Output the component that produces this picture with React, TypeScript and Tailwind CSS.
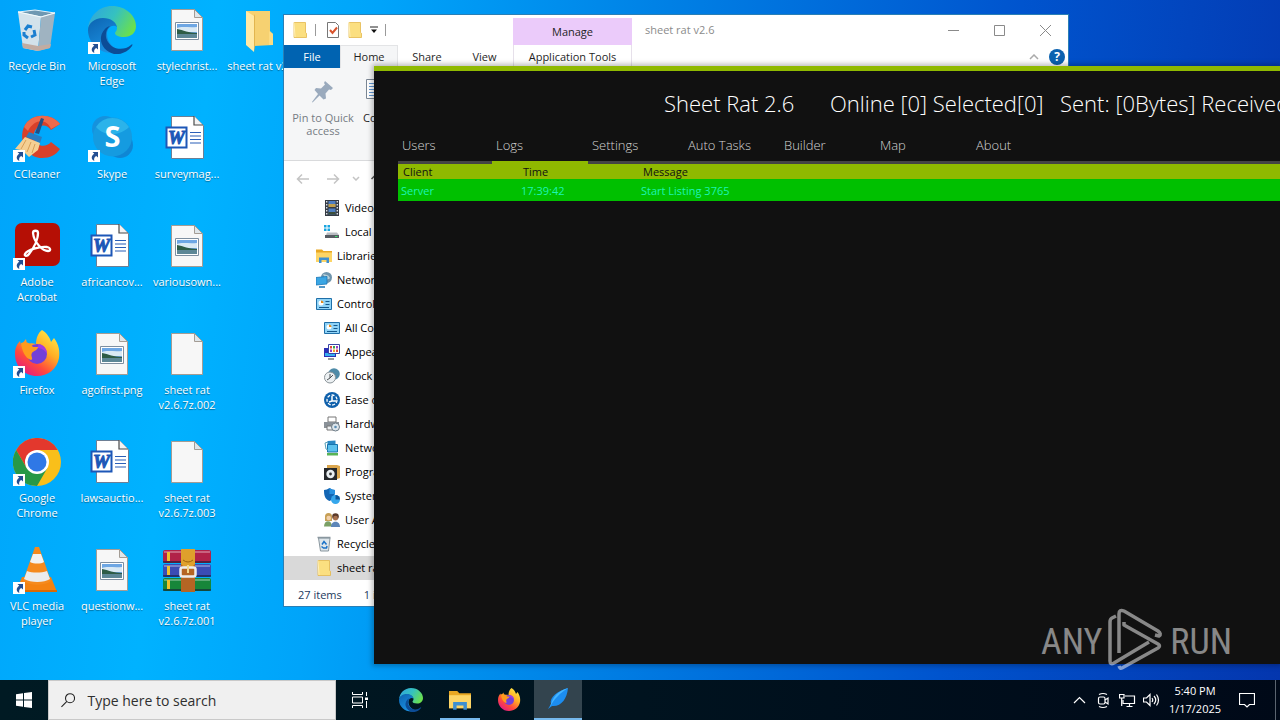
import type { ReactNode } from "react";

type IconProps = { className?: string };

/* ---------- desktop icons ---------- */

function RecycleBin({ className = "size-12" }: IconProps) {
  return (
    <svg viewBox="0 0 48 48" className={className} aria-hidden="true">
      <path d="M5 6l17-2 20 3-14 4z" fill="#6f98b2" stroke="#e6f1f7" strokeWidth="1" />
      <path d="M5 6l23 5-3 34-15-3z" fill="#d3e2eb" />
      <path d="M28 11l14-4-5 35-12 3z" fill="#9fb3c1" />
      <path d="M9 37l16 3 13-2-1 4-12 3-15-3z" fill="#c2aca2" />
      <path d="M5 6l23 5 14-4" fill="none" stroke="#f4fafc" strokeWidth="1.200" />
      <g fill="none" stroke="#1b7fd0" strokeWidth="3">
        <path d="M12 24l3-4 4 1" />
        <path d="M21 24l1 5-4 2" />
        <path d="M15 32l-4-3v-3" />
      </g>
    </svg>
  );
}

function Edge({ className = "size-12" }: IconProps) {
  return (
    <svg viewBox="0 0 48 48" className={className} aria-hidden="true">
      <defs>
        <linearGradient id="edgeTop" x1="0" y1="0.2" x2="1" y2="0.6">
          <stop offset="0" stopColor="#2fa6dd" />
          <stop offset="0.5" stopColor="#35c1c0" />
          <stop offset="1" stopColor="#6be04c" />
        </linearGradient>
        <linearGradient id="edgeMid" x1="0" y1="0" x2="0.6" y2="1">
          <stop offset="0" stopColor="#0c63b0" />
          <stop offset="1" stopColor="#1c93e4" />
        </linearGradient>
      </defs>
      <path d="M0 23C1 10 11 0 24 0c14 0 24 10 24 20 0 7-5 11-12 11-6 0-9-2-9-4 0-1 2-2 2-5 0-4-5-9-13-9C8 13 1 18 0 23z" fill="url(#edgeTop)" />
      <path d="M0 24c0-6 6-12 15-12 8 0 13 4 14 9-4-3-10 0-10 7 0 9 7 15 15 17-15 7-34-4-34-21z" fill="url(#edgeMid)" />
      <path d="M22 20c-4 3-6 10-2 16 5 8 16 9 23 3 1-1 2-1 1 1-4 6-12 9-18 8C18 46 12 39 13 31c1-6 5-10 9-11z" fill="#0c4c96" />
    </svg>
  );
}

function Page({ children }: { children?: ReactNode }) {
  return (
    <svg viewBox="0 0 48 48" className="size-12" aria-hidden="true">
      <path d="M8.500 3.500h23l8 8v33h-31z" fill="#f7f7f7" stroke="#a49c94" strokeWidth="1" />
      <path d="M31.500 3.500v8h8z" fill="#dfe6ea" stroke="#a49c94" strokeWidth="1" />
      {children}
    </svg>
  );
}

function PictureFile() {
  return (
    <Page>
      <path d="M12.500 16.500h23v17h-23z" fill="#fff" stroke="#7e8fa0" />
      <path d="M14 18h20v14H14z" fill="#6ea7e4" />
      <path d="M14 22c5-2 12 0 20-1v5H14z" fill="#d9e9f4" />
      <path d="M14 23c6 1 12 4 20 4v1H14z" fill="#2e5c46" />
      <path d="M14 28h20v4H14z" fill="#5d8796" />
    </Page>
  );
}

function WordFile() {
  return (
    <svg viewBox="0 0 48 48" className="size-12" aria-hidden="true">
      <path d="M8.500 2.500h23l9 9v33h-32z" fill="#fff" stroke="#6d7f95" strokeWidth="1" />
      <path d="M31 2v9h9" fill="#f3f3f3" stroke="#4b4b4b" strokeWidth="1.200" />
      <path d="M27 18.500h11M27 22h11M27 25.500h11M27 29h11" stroke="#2b5fb8" strokeWidth="1.200" />
      <path d="M3.500 13.500h20v20h-20z" fill="#fff" stroke="#1d57b7" strokeWidth="2" />
      <text x="13.500" y="30" textAnchor="middle" className="fill-[#1d57b7] stroke-[#1d57b7] font-['Liberation_Serif',serif] text-[19px] font-bold italic">W</text>
    </svg>
  );
}

function FolderIcon({ className = "size-12" }: IconProps) {
  return (
    <svg viewBox="0 0 48 48" className={className} aria-hidden="true">
      <path d="M8 5h24v20l3 3v11l-19 1z" fill="#f6d171" />
      <path d="M8 5l8 5v36l-8-7z" fill="#ffe9a6" />
      <path d="M16 10l1-2v32l-1 6z" fill="#e2b54e" />
      <path d="M31 25l4 3v11h-4z" fill="#fbdc84" />
    </svg>
  );
}

function CCleaner() {
  return (
    <svg viewBox="0 0 48 48" className="size-12" aria-hidden="true">
      <path d="M47 10C38-2 17-1 11 13c-6 14 3 31 18 31 8 0 14-3 18-9l-9-7c-5 6-15 5-17-4-2-10 10-18 17-8z" fill="#d8402a" />
      <path d="M47 10C38-2 17-1 11 13l4 4C22 4 34 5 38 15z" fill="#ee6a4b" />
      <path d="M28 4l3 1-5 15-4-1z" fill="#234f86" />
      <path d="M16 18l13 5-2 6-14-6z" fill="#2a7cc0" />
      <path d="M12 23l15 6-2 7-9 7-4-4-4 2v-5l-6-1z" fill="#f4cf93" />
      <path d="M13 26l-5 9M18 28l-4 10M22 30l-3 9" stroke="#d79e57" />
    </svg>
  );
}

function Skype() {
  return (
    <svg viewBox="0 0 48 48" className="size-12" aria-hidden="true">
      <circle cx="17" cy="15" r="13" fill="#1592dd" />
      <circle cx="32" cy="31" r="13" fill="#0f86d4" />
      <circle cx="24.500" cy="23" r="19.500" fill="#159be0" />
      <path d="M8 13a19.500 19.500 0 0 1 33 0C32 22 17 23 8 13z" fill="#2bb3ea" />
      <text x="24.500" y="33" textAnchor="middle" className="fill-white font-['Open_Sans',sans-serif] text-[29px] font-bold">S</text>
    </svg>
  );
}

function Acrobat() {
  return (
    <svg viewBox="0 0 48 48" className="size-12" aria-hidden="true">
      <rect x="2" y="1" width="45" height="43" rx="7" fill="#b50f05" />
      <path
        d="M20 11c0-3 5-3 5 0 0 7-5 16-9 21-2 3-5 2-4 0 2-4 15-8 22-7 4 1 4 4 1 4-5 0-14-8-15-18z"
        fill="none"
        stroke="#fff"
        strokeWidth="2.300"
      />
    </svg>
  );
}

function Firefox({ className = "size-12" }: IconProps) {
  return (
    <svg viewBox="0 0 48 48" className={className} aria-hidden="true">
      <defs>
        <linearGradient id="foxBody" x1="0.900" y1="0" x2="0.200" y2="1">
          <stop offset="0" stopColor="#fff24a" />
          <stop offset="0.400" stopColor="#ffae25" />
          <stop offset="0.700" stopColor="#ff4a3c" />
          <stop offset="1" stopColor="#e0158c" />
        </linearGradient>
      </defs>
      <path d="M29 0c5 3 8 8 9 12l3-4c5 7 6 13 5 20-2 11-11 18-22 18C11 46 2 36 2 24c0-6 2-10 5-13l1 4 5-6 1 5c3-1 6-1 9 0 0-6 2-11 6-14z" fill="url(#foxBody)" />
      <circle cx="24" cy="24" r="10" fill="#7340d8" />
      <path d="M26 14c5 1 8 5 8 10-2-4-6-6-10-6z" fill="#a43be0" />
      <path d="M8 13c5-2 9 0 12 4h5c0 3-5 4-6 6-2 3 2 6-1 7-6-2-9-9-10-17z" fill="#ff9b1c" />
    </svg>
  );
}

function Chrome() {
  return (
    <svg viewBox="0 0 48 48" className="size-12" aria-hidden="true">
      <circle cx="24" cy="24" r="24" fill="#f9bf1a" />
      <path d="M3.200 12A24 24 0 0 1 44.800 12H24L13.600 30z" fill="#e3382d" />
      <path d="M3.200 12A24 24 0 0 0 24 48l10.400-18-10.400 6-10.400-6z" fill="#279847" />
      <circle cx="24" cy="24" r="12" fill="#fff" />
      <circle cx="24" cy="24" r="9.500" fill="#2f78e6" />
    </svg>
  );
}

function Vlc() {
  return (
    <svg viewBox="0 0 48 48" className="size-12" aria-hidden="true">
      <path d="M9 31h29l6 15H3z" fill="#f48211" />
      <path d="M3 44h41v2H3z" fill="#d96a05" />
      <path d="M22 1h4l12 34c-6 5-21 5-28 0z" fill="#f58a1e" />
      <path d="M20 8h8l3 8c-3 2-10 2-14 0z" fill="#f2f2f2" />
      <path d="M14 25c5 2 14 2 20 0l3 8c-6 4-19 4-26 0z" fill="#ececec" />
    </svg>
  );
}

function WinRar() {
  return (
    <svg viewBox="0 0 48 48" className="size-12" aria-hidden="true">
      <rect x="0" y="4" width="48" height="13" rx="2" fill="#b12249" />
      <rect x="0" y="18" width="48" height="13" rx="2" fill="#3b4cb4" />
      <rect x="0" y="32" width="48" height="13" rx="2" fill="#17863a" />
      <path d="M1 6h46M1 20h46M1 34h46" stroke="#fff" strokeOpacity="0.300" strokeWidth="2" />
      <path d="M0 16h48M0 30h48M0 44h48" stroke="#16203a" strokeOpacity="0.600" strokeWidth="2" />
      <path d="M4 6h3v9H4zM4 20h3v9H4zM4 34h3v9H4z" fill="#eec02d" />
      <rect x="18" y="3" width="14" height="43" fill="#b56524" />
      <path d="M18 3h14v15l-3 3h-8l-3-3z" fill="#dfa02c" />
      <path d="M20 14q5 4 10 0" fill="none" stroke="#9b6512" />
      <rect x="17.500" y="21.500" width="15" height="9" rx="2" fill="none" stroke="#ededed" strokeWidth="2.500" />
      <path d="M25 19v8" stroke="#f3d98c" strokeWidth="2" />
    </svg>
  );
}

function ShortcutArrow() {
  return (
    <svg viewBox="0 0 12 12" className="absolute bottom-0 left-0 size-3" aria-hidden="true">
      <path d="M0 0h12v12H0z" fill="#fff" />
      <path d="M4.500 2H10v5.500L8.300 6C6.300 7 5.800 8.500 6.300 11 2.800 9.500 3 5.500 6.300 3.800z" fill="#244f92" />
    </svg>
  );
}

type DesktopItem = { label: string; icon: ReactNode; shortcut?: boolean; place: string };

const desktopItems: DesktopItem[] = [
  { label: "Recycle Bin", icon: <RecycleBin />, place: "col-start-1 row-start-1" },
  { label: "CCleaner", icon: <CCleaner />, shortcut: true, place: "col-start-1 row-start-2" },
  { label: "Adobe Acrobat", icon: <Acrobat />, shortcut: true, place: "col-start-1 row-start-3" },
  { label: "Firefox", icon: <Firefox />, shortcut: true, place: "col-start-1 row-start-4" },
  { label: "Google Chrome", icon: <Chrome />, shortcut: true, place: "col-start-1 row-start-5" },
  { label: "VLC media player", icon: <Vlc />, shortcut: true, place: "col-start-1 row-start-6" },
  { label: "Microsoft Edge", icon: <Edge />, shortcut: true, place: "col-start-2 row-start-1" },
  { label: "Skype", icon: <Skype />, shortcut: true, place: "col-start-2 row-start-2" },
  { label: "africancov...", icon: <WordFile />, place: "col-start-2 row-start-3" },
  { label: "agofirst.png", icon: <PictureFile />, place: "col-start-2 row-start-4" },
  { label: "lawsauctio...", icon: <WordFile />, place: "col-start-2 row-start-5" },
  { label: "questionw...", icon: <PictureFile />, place: "col-start-2 row-start-6" },
  { label: "stylechrist...", icon: <PictureFile />, place: "col-start-3 row-start-1" },
  { label: "surveymag...", icon: <WordFile />, place: "col-start-3 row-start-2" },
  { label: "variousown...", icon: <PictureFile />, place: "col-start-3 row-start-3" },
  { label: "sheet rat v2.6.7z.002", icon: <Page />, place: "col-start-3 row-start-4" },
  { label: "sheet rat v2.6.7z.003", icon: <Page />, place: "col-start-3 row-start-5" },
  { label: "sheet rat v2.6.7z.001", icon: <WinRar />, place: "col-start-3 row-start-6" },
  { label: "sheet rat v2.6", icon: <FolderIcon />, place: "col-start-4 row-start-1 whitespace-nowrap" },
];

function Desktop() {
  return (
    <div className="grid auto-rows-[108px] grid-cols-[74px_76px_74px_76px] pt-1.5">
      {desktopItems.map((item) => (
        <button key={item.label} type="button" className={`flex flex-col items-center gap-1 ${item.place}`}>
          <span className="relative block">
            {item.icon}
            {item.shortcut && <ShortcutArrow />}
          </span>
          <span className="w-[70px] text-center text-[11px] leading-[15px] text-white [text-shadow:0_1px_1px_#0006]">{item.label}</span>
        </button>
      ))}
    </div>
  );
}

/* ---------- explorer ---------- */

function SmallFolder({ className = "size-4" }: IconProps) {
  return (
    <svg viewBox="0 0 16 16" className={className} aria-hidden="true">
      <path d="M2 .5h11.500v10l1 .8v4.200H2z" fill="#fbdf80" stroke="#e3b84d" strokeWidth="0.800" />
      <path d="M2 .5l1 14.500" stroke="#fff0b8" />
    </svg>
  );
}

function LibraryFolder({ className = "size-4" }: IconProps) {
  return (
    <svg viewBox="0 0 16 16" className={className} aria-hidden="true">
      <path d="M0 1.500h6l1.500 1.500H16V14H0z" fill="#e9a823" />
      <path d="M0 4.500h16V14H0z" fill="#fdd566" />
      <path d="M3 15V9.500h10V15h-2.500v-3h-5v3z" fill="#3e8fd0" />
    </svg>
  );
}

function ControlPanel() {
  return (
    <svg viewBox="0 0 16 16" className="size-4" aria-hidden="true">
      <path d="M.5 2.500h15v11H.5z" fill="#8fd3f7" stroke="#1f6fa8" />
      <circle cx="5" cy="7" r="2.500" fill="#fff" />
      <path d="M5 7V4.500A2.500 2.500 0 0 1 7.500 7z" fill="#e08a1f" />
      <path d="M9.500 5.500h4M9.500 8.500h4M3 11.500h10" stroke="#14588c" />
    </svg>
  );
}

const treeIcons: Record<string, ReactNode> = {
  video: (
    <svg viewBox="0 0 16 16" className="size-4" aria-hidden="true">
      <path d="M1 0h14v16H1z" fill="#353b44" />
      <path d="M4.500 1h7v6h-7z" fill="#4e7ec2" /><path d="M4.500 4h7v3h-7z" fill="#c2a04b" />
      <path d="M4.500 8.500h7v6h-7z" fill="#4e7ec2" /><path d="M4.500 12h7v2.500h-7z" fill="#3b4d3a" />
      <path d="M2.700 1v14M13.300 1v14" stroke="#dde2e8" strokeWidth="1.400" strokeDasharray="1.500 1.500" />
    </svg>
  ),
  disk: (
    <svg viewBox="0 0 16 16" className="size-4" aria-hidden="true">
      <path d="M0 1h2.500v2.500H0zM3.500 1H6v2.500H3.500zM0 4.500h2.500V7H0zM3.500 4.500H6V7H3.500z" fill="#18a5e0" />
      <path d="M3 8.500h10l2 2.500v3H1z" fill="#b9bdc2" /><path d="M1 11h14v3H1z" fill="#575c63" />
      <path d="M11 12.500h2.500" stroke="#3de06c" />
    </svg>
  ),
  library: <LibraryFolder />,
  network: (
    <svg viewBox="0 0 16 16" className="size-4" aria-hidden="true">
      <circle cx="10.500" cy="5.500" r="5.500" fill="#6f94ac" /><path d="M7 2c3 1 5 0 7 4-3 3-5 1-7-4z" fill="#b7d0d9" />
      <path d="M0 5.500l11-1v7.500l-11 1z" fill="#3aa6e4" stroke="#1975b5" strokeWidth="0.800" /><path d="M3 15h6" stroke="#1975b5" strokeWidth="1.500" />
    </svg>
  ),
  control: <ControlPanel />,
  appearance: (
    <svg viewBox="0 0 16 16" className="size-4" aria-hidden="true">
      <path d="M0 4h12v9H0z" fill="#2b2fb5" /><path d="M1 9h10v3H1z" fill="#36aef0" />
      <path d="M4.500 .5h11v9h-11z" fill="#fff" stroke="#3a44a5" />
      <path d="M6 2h2v2.500H6zM12 5.500h2V8h-2z" fill="#e24b35" /><path d="M9 2h2v2.500H9z" fill="#37a24c" /><path d="M12 2h2v2.500h-2zM6 5.500h2V8H6z" fill="#9a3fc2" /><path d="M9 5.500h2V8H9z" fill="#f0a52a" />
      <path d="M4 15h6" stroke="#777" strokeWidth="1.500" />
    </svg>
  ),
  clock: (
    <svg viewBox="0 0 16 16" className="size-4" aria-hidden="true">
      <circle cx="10" cy="6" r="5.800" fill="#4f8ba8" /><circle cx="6" cy="9.500" r="5.500" fill="#edf1f3" stroke="#8b9499" />
      <path d="M6 6v4l3-3M3 12l3-2" fill="none" stroke="#4d5256" />
    </svg>
  ),
  ease: (
    <svg viewBox="0 0 16 16" className="size-4" aria-hidden="true">
      <circle cx="8" cy="8" r="8" fill="#0f60ab" /><circle cx="8" cy="8" r="5" fill="none" stroke="#fff" strokeWidth="1.300" strokeDasharray="3 1.500" />
      <path d="M8 4v5h4M8 9l-3 1" fill="none" stroke="#fff" strokeWidth="1.500" />
    </svg>
  ),
  hardware: (
    <svg viewBox="0 0 16 16" className="size-4" aria-hidden="true">
      <path d="M4 1h8v5H4z" fill="#fff" stroke="#777" /><path d="M0 6h15v6H0z" fill="#8a9198" /><path d="M3 10h7v4H3z" fill="#eceff1" stroke="#777" />
      <circle cx="11.500" cy="11" r="4" fill="#dde6ec" stroke="#6d7b86" /><circle cx="11.500" cy="11" r="1.300" fill="#5c8db3" />
    </svg>
  ),
  netweb: (
    <svg viewBox="0 0 16 16" className="size-4" aria-hidden="true">
      <path d="M3.500 1l8-.5v5h-8z" fill="#2a88c4" /><path d="M3.500 4.500h10v7.500h-10z" fill="#5bc1ee" stroke="#1673ad" />
      <path d="M3 13h11v2.500H3z" fill="#58b356" /><path d="M4 2L1 3l1 6 2 1" fill="none" stroke="#58a0b8" />
    </svg>
  ),
  programs: (
    <svg viewBox="0 0 16 16" className="size-4" aria-hidden="true">
      <path d="M3 1h10l3 1v12l-3 1H3z" fill="#dba64d" /><path d="M0 4h13v12H0z" fill="#24272b" />
      <circle cx="6.500" cy="10" r="4.200" fill="#e9eef1" /><circle cx="6.500" cy="10" r="1.400" fill="#333" />
    </svg>
  ),
  system: (
    <svg viewBox="0 0 16 16" className="size-4" aria-hidden="true">
      <path d="M0 2q3 0 5.500-2Q8 2 11 2c0 6-1 9-5.500 11C1 11 0 8 0 2z" fill="#1466b4" /><path d="M5.500 0Q8 2 11 2v4H5.500z" fill="#2791e0" />
      <circle cx="11.500" cy="11.500" r="4.500" fill="#36a7ec" /><path d="M11.500 11.500V7a4.500 4.500 0 0 1 4.500 4.500z" fill="#0e579b" />
    </svg>
  ),
  users: (
    <svg viewBox="0 0 16 16" className="size-4" aria-hidden="true">
      <path d="M0 14.500c0-7 8-7 8 0z" fill="#7ba066" /><path d="M1 9V4.500a3.500 3.500 0 0 1 7 0V9z" fill="#c79f55" /><circle cx="4.700" cy="6" r="2.300" fill="#f2d0aa" />
      <path d="M7 15c0-7 9-7 9 0z" fill="#5d86b8" /><circle cx="11.500" cy="4.500" r="3.300" fill="#5b3a2a" /><circle cx="11.500" cy="6.200" r="2.400" fill="#a7714e" />
    </svg>
  ),
  bin: (
    <svg viewBox="0 0 16 16" className="size-4" aria-hidden="true">
      <path d="M2.500 2h11.500l-1.500 13h-8z" fill="#dde5ea" stroke="#8a979f" /><path d="M1.500 1.500h13" stroke="#8a979f" strokeWidth="1.500" />
      <path d="M6 8.500l2-3 2.500 3M5.500 10.500l2 1.500h3l.5-2" fill="none" stroke="#1b72c8" strokeWidth="1.500" />
    </svg>
  ),
  folder: <SmallFolder />,
};

const tree: { label: string; icon: string; deep: boolean; selected?: boolean }[] = [
  { label: "Videos", icon: "video", deep: true },
  { label: "Local Disk (C:)", icon: "disk", deep: true },
  { label: "Libraries", icon: "library", deep: false },
  { label: "Network", icon: "network", deep: false },
  { label: "Control Panel", icon: "control", deep: false },
  { label: "All Control Panel Items", icon: "control", deep: true },
  { label: "Appearance", icon: "appearance", deep: true },
  { label: "Clock and Region", icon: "clock", deep: true },
  { label: "Ease of Access", icon: "ease", deep: true },
  { label: "Hardware and Sound", icon: "hardware", deep: true },
  { label: "Network and Internet", icon: "netweb", deep: true },
  { label: "Programs", icon: "programs", deep: true },
  { label: "System and Security", icon: "system", deep: true },
  { label: "User Accounts", icon: "users", deep: true },
  { label: "Recycle Bin", icon: "bin", deep: false },
  { label: "sheet rat v2.6", icon: "folder", deep: false, selected: true },
];

function Explorer() {
  return (
    <section className="absolute top-[14px] left-[283px] flex w-[786px] flex-col border border-[#2a7fb5] bg-white text-[11px] leading-4 text-[#1f1f1f]" aria-label="File Explorer">
      <header className="flex h-[53px]">
        <div className="flex w-[229px] flex-col">
          <div className="flex h-[30px] items-center pl-2">
            <SmallFolder />
            <span className="mx-[7px] h-3 w-px bg-[#9a9a9a]" />
            <svg viewBox="0 0 16 16" className="ml-0.5 size-4" aria-hidden="true">
              <path d="M2.500 .5h8l3 3v12h-11z" fill="#fff" stroke="#777" />
              <path d="M5 8l2.500 3L12 5.500" fill="none" stroke="#d9542d" strokeWidth="2" />
            </svg>
            <span className="ml-1.5"><SmallFolder /></span>
            <svg viewBox="0 0 8 8" className="ml-[7px] size-2" aria-hidden="true">
              <path d="M0 1h8" stroke="#222" /><path d="M1 3.500h6L4 7z" fill="#111" />
            </svg>
            <span className="ml-[7px] h-3 w-px bg-[#9a9a9a]" />
          </div>
          <nav className="grid flex-1 grid-cols-[56px_58px_58px_57px] text-center">
            <button type="button" className="bg-[#0063b1] text-white">File</button>
            <button type="button" className="border-x border-t border-[#e3e4e6] bg-[#f5f6f7]">Home</button>
            <button type="button">Share</button>
            <button type="button">View</button>
          </nav>
        </div>
        <div className="flex w-[119px] flex-col pt-[3px] text-center">
          <div className="flex h-[27px] items-center justify-center bg-[#ebcbfa]">Manage</div>
          <button type="button" className="flex-1 border-x border-[#e6e0ea]">Application Tools</button>
        </div>
        <div className="flex flex-1 flex-col pl-[13px]">
          <div className="flex h-[30px] items-center">
            <span className="flex-1 text-[#8b8b8b]">sheet rat v2.6</span>
            {["M0 5.500h11", "M.5.500h10v10H.5z", "M0 0l11 11M11 0L0 11"].map((d, i) => (
              <button key={d} type="button" aria-label={["Minimize", "Maximize", "Close"][i]} className="flex h-full w-[46px] items-center justify-center">
                <svg viewBox="0 0 11 11" className="size-[11px]" aria-hidden="true"><path d={d} fill="none" stroke="#8a8a8a" /></svg>
              </button>
            ))}
          </div>
          <div className="flex flex-1 items-center justify-end gap-2.5 pr-[3px]">
            <svg viewBox="0 0 10 6" className="h-1.5 w-2.5" aria-hidden="true"><path d="M1 5l4-4 4 4" fill="none" stroke="#aaa" strokeWidth="1.500" /></svg>
            <button type="button" className="flex size-4 items-center justify-center rounded-full bg-[#0b62b0] text-[12px] font-bold text-white">?</button>
          </div>
        </div>
      </header>

      <div className="flex h-[93px] gap-1 border-b border-[#d9dadc] bg-[#f5f6f7] pt-[11px] pl-2">
        <button type="button" className="flex w-[62px] flex-col items-center whitespace-nowrap text-[#767c84]">
          <svg viewBox="0 0 24 24" className="size-6" aria-hidden="true">
            <path d="M14 2l8 7-2 2-2-.5-3.500 4 .5 5-2.500 1-4-4-7 7-.500-.5 6-8-3.500-4 1.500-2 5 .5L14 5.500 13 4z" fill="#9aaabd" />
          </svg>
          <span className="pt-2 leading-[13px]">Pin to Quick<br />access</span>
        </button>
        <button type="button" className="flex w-9 flex-col items-center">
          <svg viewBox="0 0 24 24" className="size-6" aria-hidden="true">
            <path d="M2.500 .5h13v19h-13z" fill="#fff" stroke="#7b8794" />
            <path d="M5 4.500h9M5 7.500h9M5 10.500h9M5 13.500h9M5 16.500h9" stroke="#5f95d2" />
          </svg>
          <span className="pt-2 leading-[13px]">Copy</span>
        </button>
      </div>

      <div className="flex h-[35px] items-center pl-3">
        <svg viewBox="0 0 14 12" className="h-3 w-3.5" aria-hidden="true"><path d="M13 6H2M6 1.500L1.500 6 6 10.500" fill="none" stroke="#c4c4c4" strokeWidth="1.500" /></svg>
        <svg viewBox="0 0 14 12" className="ml-4 h-3 w-3.5" aria-hidden="true"><path d="M1 6h11M8 1.500L12.500 6 8 10.500" fill="none" stroke="#c4c4c4" strokeWidth="1.500" /></svg>
        <svg viewBox="0 0 8 5" className="ml-3 h-[5px] w-2" aria-hidden="true"><path d="M1 1l3 3 3-3" fill="none" stroke="#c4c4c4" strokeWidth="1.500" /></svg>
        <svg viewBox="0 0 12 12" className="ml-2.5 size-3" aria-hidden="true"><path d="M6 11V2M1.500 6L6 1.500 10.500 6" fill="none" stroke="#555" strokeWidth="1.500" /></svg>
      </div>

      <ul className="flex flex-col text-black">
        {tree.map((node) => (
          <li key={node.label} className={`flex h-6 items-center gap-[5px] whitespace-nowrap ${node.deep ? "pl-10" : "pl-8"} ${node.selected ? "bg-[#d9d9d9]" : ""}`}>
            {treeIcons[node.icon]}
            {node.label}
          </li>
        ))}
      </ul>
      <footer className="flex h-[26px] items-center gap-[22px] pt-[3px] pl-[14px] text-[#23395d]">
        <span>27 items</span>
        <span>1 item selected</span>
      </footer>
    </section>
  );
}

/* ---------- application window ---------- */

const tabs = ["Users", "Logs", "Settings", "Auto Tasks", "Builder", "Map", "About"];

function AppWindow() {
  return (
    <section className="absolute top-[66px] right-0 bottom-4 left-[374px] overflow-hidden border-t-[5px] border-[#8fb900] bg-[#111111] pl-6 shadow-[0_0_5px_2px_#0004]" aria-label="Sheet Rat 2.6">
      <h1 className="flex h-16 items-center pl-[266px] text-[22px] leading-8 font-light whitespace-nowrap text-white">
        <span className="w-[166px] shrink-0">Sheet Rat 2.6</span>
        <span className="w-[230px] shrink-0">Online [0] Selected[0]</span>
        <span className="shrink-0">Sent: [0Bytes] Received</span>
      </h1>
      <nav className="flex h-[29px] text-[13px] font-light text-[#d4d4d4]">
        {tabs.map((tab) => (
          <button key={tab} type="button" className={`border-b-[3px] pb-1 pl-1 text-left whitespace-nowrap ${tab === "Users" ? "w-[94px]" : "w-24"} ${tab === "Logs" ? "border-[#8fb900]" : "border-[#444444]"}`}>
            {tab}
          </button>
        ))}
        <span className="flex-1 border-b-[3px] border-[#444444]" />
      </nav>
      <table className="w-full table-fixed border-collapse text-left text-[11px]">
        <thead className="bg-[#8fb900] text-[#111111]">
          <tr className="h-[15px] leading-[15px]">
            <th className="w-[120px] p-0 pl-[5px] font-normal">Client</th>
            <th className="w-[120px] p-0 pl-[5px] font-normal">Time</th>
            <th className="p-0 pl-[5px] font-normal">Message</th>
          </tr>
        </thead>
        <tbody className="bg-[#00c000] text-[#1cf5b4]">
          <tr className="leading-[21px]">
            <td className="p-0 pt-px pl-[3px]">Server</td>
            <td className="p-0 pt-px pl-[3px]">17:39:42</td>
            <td className="p-0 pt-px pl-[3px]">Start Listing 3765</td>
          </tr>
        </tbody>
      </table>
    </section>
  );
}

function Watermark() {
  return (
    <div className="absolute right-12 bottom-2 flex items-center gap-1.5 font-['Roboto_Condensed','Liberation_Sans_Narrow',sans-serif] text-[36px] leading-[60px] text-[#ffffff80]">
      <span className="pt-1">ANY</span>
      <svg viewBox="0 0 56 64" className="h-16 w-14" aria-hidden="true">
        <g fill="none" stroke="#ffffff" strokeOpacity="0.500" strokeWidth="3.500" strokeLinejoin="round">
          <path d="M8 8L4 10q-2 1-2 4v39q0 4 4 2l35-21" />
          <path d="M11 45V6q0-5 5-3l34 20q4 3 1 5l-4-1" />
          <path d="M16 14v3l34 19q3 2 0 4L14 60q-2 1-3-2" />
        </g>
      </svg>
      <span className="pt-1">RUN</span>
    </div>
  );
}

/* ---------- taskbar ---------- */

function Feather() {
  return (
    <svg viewBox="0 0 24 24" className="size-6" aria-hidden="true">
      <path d="M22 1C12 4 3 10 5 17l-3 5 4-3c9 1 15-7 16-18z" fill="#1c8df0" />
      <path d="M22 1C14 6 8 12 4 20c3-11 8-16 18-19z" fill="#45b5ff" />
    </svg>
  );
}

const apps = [
  { name: "Microsoft Edge", icon: <Edge className="size-6" />, style: "" },
  { name: "File Explorer", icon: <LibraryFolder className="size-[22px]" />, style: "bg-[linear-gradient(#76b9ed,#76b9ed)] bg-[length:40px_2px] bg-bottom bg-no-repeat" },
  { name: "Firefox", icon: <Firefox className="size-6" />, style: "" },
  { name: "Sheet Rat", icon: <Feather />, style: "border-b-2 border-[#76b9ed] bg-[#33444e]" },
];

const trayIcons: { name: string; art: ReactNode }[] = [
  { name: "Show hidden icons", art: <path d="M3 11l5.500-5.500L14 11" /> },
  { name: "Meet Now", art: <><rect x="3.500" y="5" width="6.500" height="7" rx="1.500" /><path d="M10 8l3-2v6l-3-2M4 2.500q4-2 8 0M4 14.500q4 2 8 0" /></> },
  { name: "Network", art: <><path d="M6 4h9.500v7.500H4V8M7.500 14.500h6M10.500 11.500v3" /><path d="M.5 2.500h4.500V6H.5zM2.700 6v8" /></> },
  { name: "Volume", art: <path d="M.5 6h3L7 2.500v11L3.500 10h-3zM9 6q1.500 2 0 4M11 4q3.500 4 0 8M13.500 2.500q4 5.500 0 11" /> },
];

function Taskbar() {
  return (
    <footer className="flex h-10 shrink-0 bg-linear-to-r from-[#001a23] via-[#00131f] to-[#000918] text-white">
      <button type="button" aria-label="Start" className="flex w-12 items-center justify-center">
        <svg viewBox="0 0 16 16" className="size-4" aria-hidden="true">
          <path d="M0 2.200L7 1.200V7.500H0zM8 1L16 0v7.500H8zM0 8.500h7v6.300L0 13.800zM8 8.500h8V16L8 15z" fill="#fff" />
        </svg>
      </button>
      <label className="flex w-72 items-center gap-3 border border-[#c9c9c9] bg-[#f0f0f0] pl-3">
        <svg viewBox="0 0 16 16" className="size-4" aria-hidden="true">
          <circle cx="10" cy="6" r="5" fill="none" stroke="#222" strokeWidth="1.200" /><path d="M6.500 9.500L.5 15.500" stroke="#222" strokeWidth="1.200" />
        </svg>
        <input type="text" aria-label="Search" placeholder="Type here to search" className="w-full bg-transparent text-[14px] outline-none placeholder:text-[#2f2f2f]" />
      </label>
      <button type="button" aria-label="Task View" className="mr-[3px] flex w-12 items-center justify-center">
        <svg viewBox="0 0 16 16" className="size-4" fill="none" stroke="#fff" aria-hidden="true">
          <path d="M.5 0v2.500h10V0M.5 5h10v6H.5zM.5 16v-2.500h10V16M14.500 0v4M14.500 9v7" /><path d="M13 5.500h3v2.500h-3z" fill="#fff" stroke="none" />
        </svg>
      </button>
      <div className="flex gap-px">
        {apps.map((app) => (
          <button key={app.name} type="button" aria-label={app.name} className={`flex w-12 items-center justify-center ${app.style}`}>
            {app.icon}
          </button>
        ))}
      </div>
      <div className="ml-auto flex items-center">
        {trayIcons.map((t) => (
          <button key={t.name} type="button" aria-label={t.name} className="flex w-6 justify-center">
            <svg viewBox="0 0 17 17" className="size-[17px]" fill="none" stroke="#fff" strokeWidth="1.200" aria-hidden="true">{t.art}</svg>
          </button>
        ))}
        <div className="w-16 text-center text-[11px] leading-[18px] whitespace-nowrap">5:40 PM<br />1/17/2025</div>
        <button type="button" aria-label="Notifications" className="flex w-10 justify-center">
          <svg viewBox="0 0 16 16" className="size-4" fill="none" stroke="#fff" strokeWidth="1.200" aria-hidden="true">
            <path d="M.5 1.500h15v11H10.500L8 15l-2.500-2.500H.5z" />
          </svg>
        </button>
        <span className="mr-1 ml-2 h-10 w-px bg-[#5b6470]" />
      </div>
    </footer>
  );
}

export default function App() {
  return (
    <div className="flex h-screen flex-col overflow-hidden font-['Open_Sans','Noto_Sans',sans-serif]">
      <main className="relative min-h-0 flex-1 overflow-hidden bg-[linear-gradient(97deg,#00a4fa_0%,#00b2ff_16%,#00a4fa_28%,#0082e6_48%,#0054ce_75%,#0436ae_100%)]">
        <Desktop />
        <Explorer />
        <AppWindow />
        <Watermark />
      </main>
      <Taskbar />
    </div>
  );
}
